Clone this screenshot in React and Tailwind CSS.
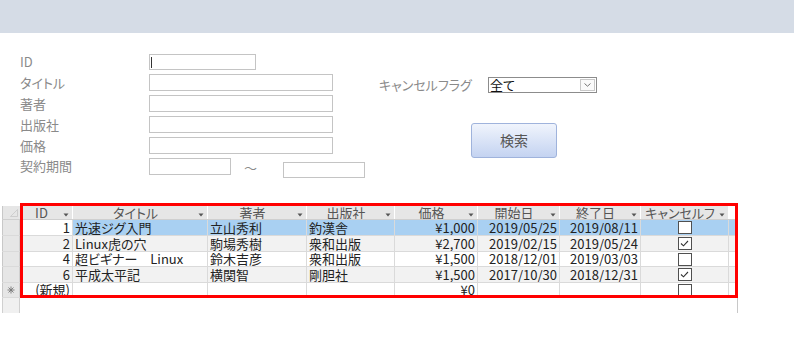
import React from 'react';

const font = "font-['Noto_Sans_CJK_JP',sans-serif] [font-feature-settings:'palt']";

const cols = [
  { key: 'sel', w: 'w-[18px]' },
  { key: 'id', w: 'w-[53px]', label: 'ID', align: 'text-right' },
  { key: 'title', w: 'w-[135px]', label: 'タイトル', align: 'text-left' },
  { key: 'author', w: 'w-[99px]', label: '著者', align: 'text-left' },
  { key: 'pub', w: 'w-[88px]', label: '出版社', align: 'text-left' },
  { key: 'price', w: 'w-[83px]', label: '価格', align: 'text-right' },
  { key: 'start', w: 'w-[82px]', label: '開始日', align: 'text-right' },
  { key: 'end', w: 'w-[81px]', label: '終了日', align: 'text-right' },
  { key: 'cancel', w: 'w-[88px]', label: 'キャンセルフ', align: 'text-center' },
];

const rows = [
  { id: '1', title: '光速ジグ入門', author: '立山秀利', pub: '釣漢舎', price: '¥1,000', start: '2019/05/25', end: '2019/08/11', cancel: false, selected: true, h: 'h-[16px]', bg: 'bg-white' },
  { id: '2', title: 'Linux虎の穴', author: '駒場秀樹', pub: '衆和出版', price: '¥2,700', start: '2019/02/15', end: '2019/05/24', cancel: true, h: 'h-[16px]', bg: 'bg-[#f2f2f2]' },
  { id: '4', title: '超ビギナー　Linux', author: '鈴木吉彦', pub: '衆和出版', price: '¥1,500', start: '2018/12/01', end: '2019/03/03', cancel: false, h: 'h-[15px]', bg: 'bg-white' },
  { id: '6', title: '平成太平記', author: '横関智', pub: '剛胆社', price: '¥1,500', start: '2017/10/30', end: '2018/12/31', cancel: true, h: 'h-[16px]', bg: 'bg-[#f2f2f2]' },
  { id: '(新規)', title: '', author: '', pub: '', price: '¥0', start: '', end: '', cancel: false, isNew: true, h: 'h-[15px]', bg: 'bg-white' },
];

function Box({ w, h = 'h-[17px]', caret, className = '' }) {
  return (
    <div className={`${w} ${h} ${className} flex items-center border border-[#c4c4c4] bg-white pl-[1px]`}>
      {caret && <span className="h-[11px] w-[1px] bg-[#333]" />}
    </div>
  );
}

function Field({ label, children }) {
  return (
    <div className="flex items-center">
      <span className="w-[129px] text-[13px] leading-[16px] text-[#8a8a8a]">{label}</span>
      {children}
    </div>
  );
}

function Arrow() {
  return (
    <svg width="6" height="4" viewBox="0 0 6 4" className="mt-[4px] shrink-0">
      <path d="M0.5 0.5h5L3 3.5z" fill="#555" />
    </svg>
  );
}

function Check({ on }) {
  return (
    <div className="flex h-[13px] w-[14px] items-center justify-center border border-[#505050] bg-white">
      {on && (
        <svg width="9" height="7" viewBox="0 0 9 7">
          <path d="M1 3.5l2.5 2.3L8 1" fill="none" stroke="#333" strokeWidth="1.1" />
        </svg>
      )}
    </div>
  );
}

function Cell({ col, row }) {
  const base = `${col.w} flex h-full items-center overflow-hidden whitespace-nowrap border-r border-[#dadada] px-[2px]`;
  if (col.key === 'sel') {
    return (
      <div className={`${col.w} flex h-full items-center justify-center border-l border-l-[#c8c8c8] border-r border-r-[#d0d0d0] bg-[#e6e6e6]`}>
        {row.isNew && (
          <svg width="8" height="8" viewBox="0 0 8 8">
            <path d="M4 0.5v7M0.5 4h7M1.5 1.5l5 5M6.5 1.5l-5 5" stroke="#777" strokeWidth="0.9" />
          </svg>
        )}
      </div>
    );
  }
  const bg = row.selected && col.key !== 'id' ? 'bg-[#a9d0f2]' : '';
  if (col.key === 'cancel') {
    return (
      <div className={`${base} ${bg} justify-center`}>
        <Check on={row.cancel} />
      </div>
    );
  }
  return (
    <div className={`${base} ${bg}`}>
      <span className={`block w-full ${col.align}`}>{row[col.key]}</span>
    </div>
  );
}

export default function App() {
  return (
    <div className={`${font} h-[338px] w-[794px] overflow-hidden bg-white text-[#222]`}>
      <div className="h-[33px] bg-[#d5dce6]" />

      <div className="flex h-[173px] pt-[21px]">
        <div className="flex flex-col gap-[4px] pl-[20px]">
          <Field label="ID">
            <Box w="w-[107px]" h="h-[16px]" caret />
          </Field>
          <Field label="タイトル">
            <Box w="w-[184px]" />
          </Field>
          <Field label="著者">
            <Box w="w-[184px]" />
          </Field>
          <Field label="出版社">
            <Box w="w-[184px]" />
          </Field>
          <Field label="価格">
            <Box w="w-[184px]" />
          </Field>
          <div className="flex items-start">
            <span className="w-[129px] text-[13px] leading-[16px] text-[#8a8a8a]">契約期間</span>
            <Box w="w-[82px]" />
            <span className="w-[52px] pl-[13px] text-[13px] leading-[20px] text-[#8a8a8a]">～</span>
            <Box w="w-[82px]" h="h-[16px]" className="mt-[4px]" />
          </div>
        </div>

        <div className="ml-[14px] flex flex-col pt-[23px]">
          <div className="flex items-center">
            <span className="w-[109px] text-[13px] leading-[16px] text-[#8a8a8a]">キャンセルフラグ</span>
            <div className="flex h-[16px] w-[109px] items-center border border-[#8c8c8c] bg-white">
              <span className="flex-1 pl-[1px] text-[13px] leading-[14px] text-[#111]">全て</span>
              <div className="mr-[1px] flex h-[12px] w-[15px] items-center justify-center border border-[#c8c8c8] bg-[#fafafa]">
                <svg width="7" height="4" viewBox="0 0 7 4">
                  <path d="M0.5 0.5L3.5 3.2L6.5 0.5" fill="none" stroke="#666" strokeWidth="0.9" />
                </svg>
              </div>
            </div>
          </div>
          <button className="ml-[92px] mt-[30px] flex h-[35px] w-[86px] items-center justify-center rounded-[3px] border border-[#9fb3dc] bg-gradient-to-b from-[#f0f4fc] to-[#c4d3f1] text-[14px] text-[#555]">
            検索
          </button>
        </div>
      </div>

      <div className="relative ml-[2px] w-[736px] text-[13px] leading-[14px]">
        <div className="flex h-[14px] border-b border-[#cfcfcf] bg-white">
          {cols.map((col) =>
            col.key === 'sel' ? (
              <div key={col.key} className={`${col.w} flex h-full items-end justify-end border-l border-[#c8c8c8] bg-[#e6e6e6] pb-[2px] pr-[2px]`}>
                <svg width="8" height="8" viewBox="0 0 8 8">
                  <path d="M7.5 0.5V7.5H0.5z" fill="none" stroke="#c8c8c8" strokeWidth="0.8" />
                </svg>
              </div>
            ) : (
              <div key={col.key} className={`${col.w} flex h-full items-center overflow-hidden whitespace-nowrap border-r border-white bg-[#e6e6e6] pr-[3px] text-[#555]`}>
                <span className="flex-1 text-center leading-[13px]">{col.label}</span>
                <Arrow />
              </div>
            )
          )}
          <div className="flex-1" />
        </div>

        {rows.map((row) => (
          <div key={row.id} className={`flex ${row.h} border-b border-[#dadada] ${row.bg}`}>
            {cols.map((col) => (
              <Cell key={col.key} col={col} row={row} />
            ))}
            <div className={`flex-1 ${row.selected ? 'bg-[#a9d0f2]' : ''}`} />
          </div>
        ))}

        <div className="flex h-[15px]">
          <div className="w-[18px] border-l border-r border-[#d0d0d0] bg-[#f0f0f0]" />
          <div className="flex-1 border-r border-[#c8c8c8]" />
        </div>

        <div className="pointer-events-none absolute left-[18px] top-[-3px] h-[95px] w-[718px] border-[3px] border-[#ff0000]" />
      </div>
    </div>
  );
}
